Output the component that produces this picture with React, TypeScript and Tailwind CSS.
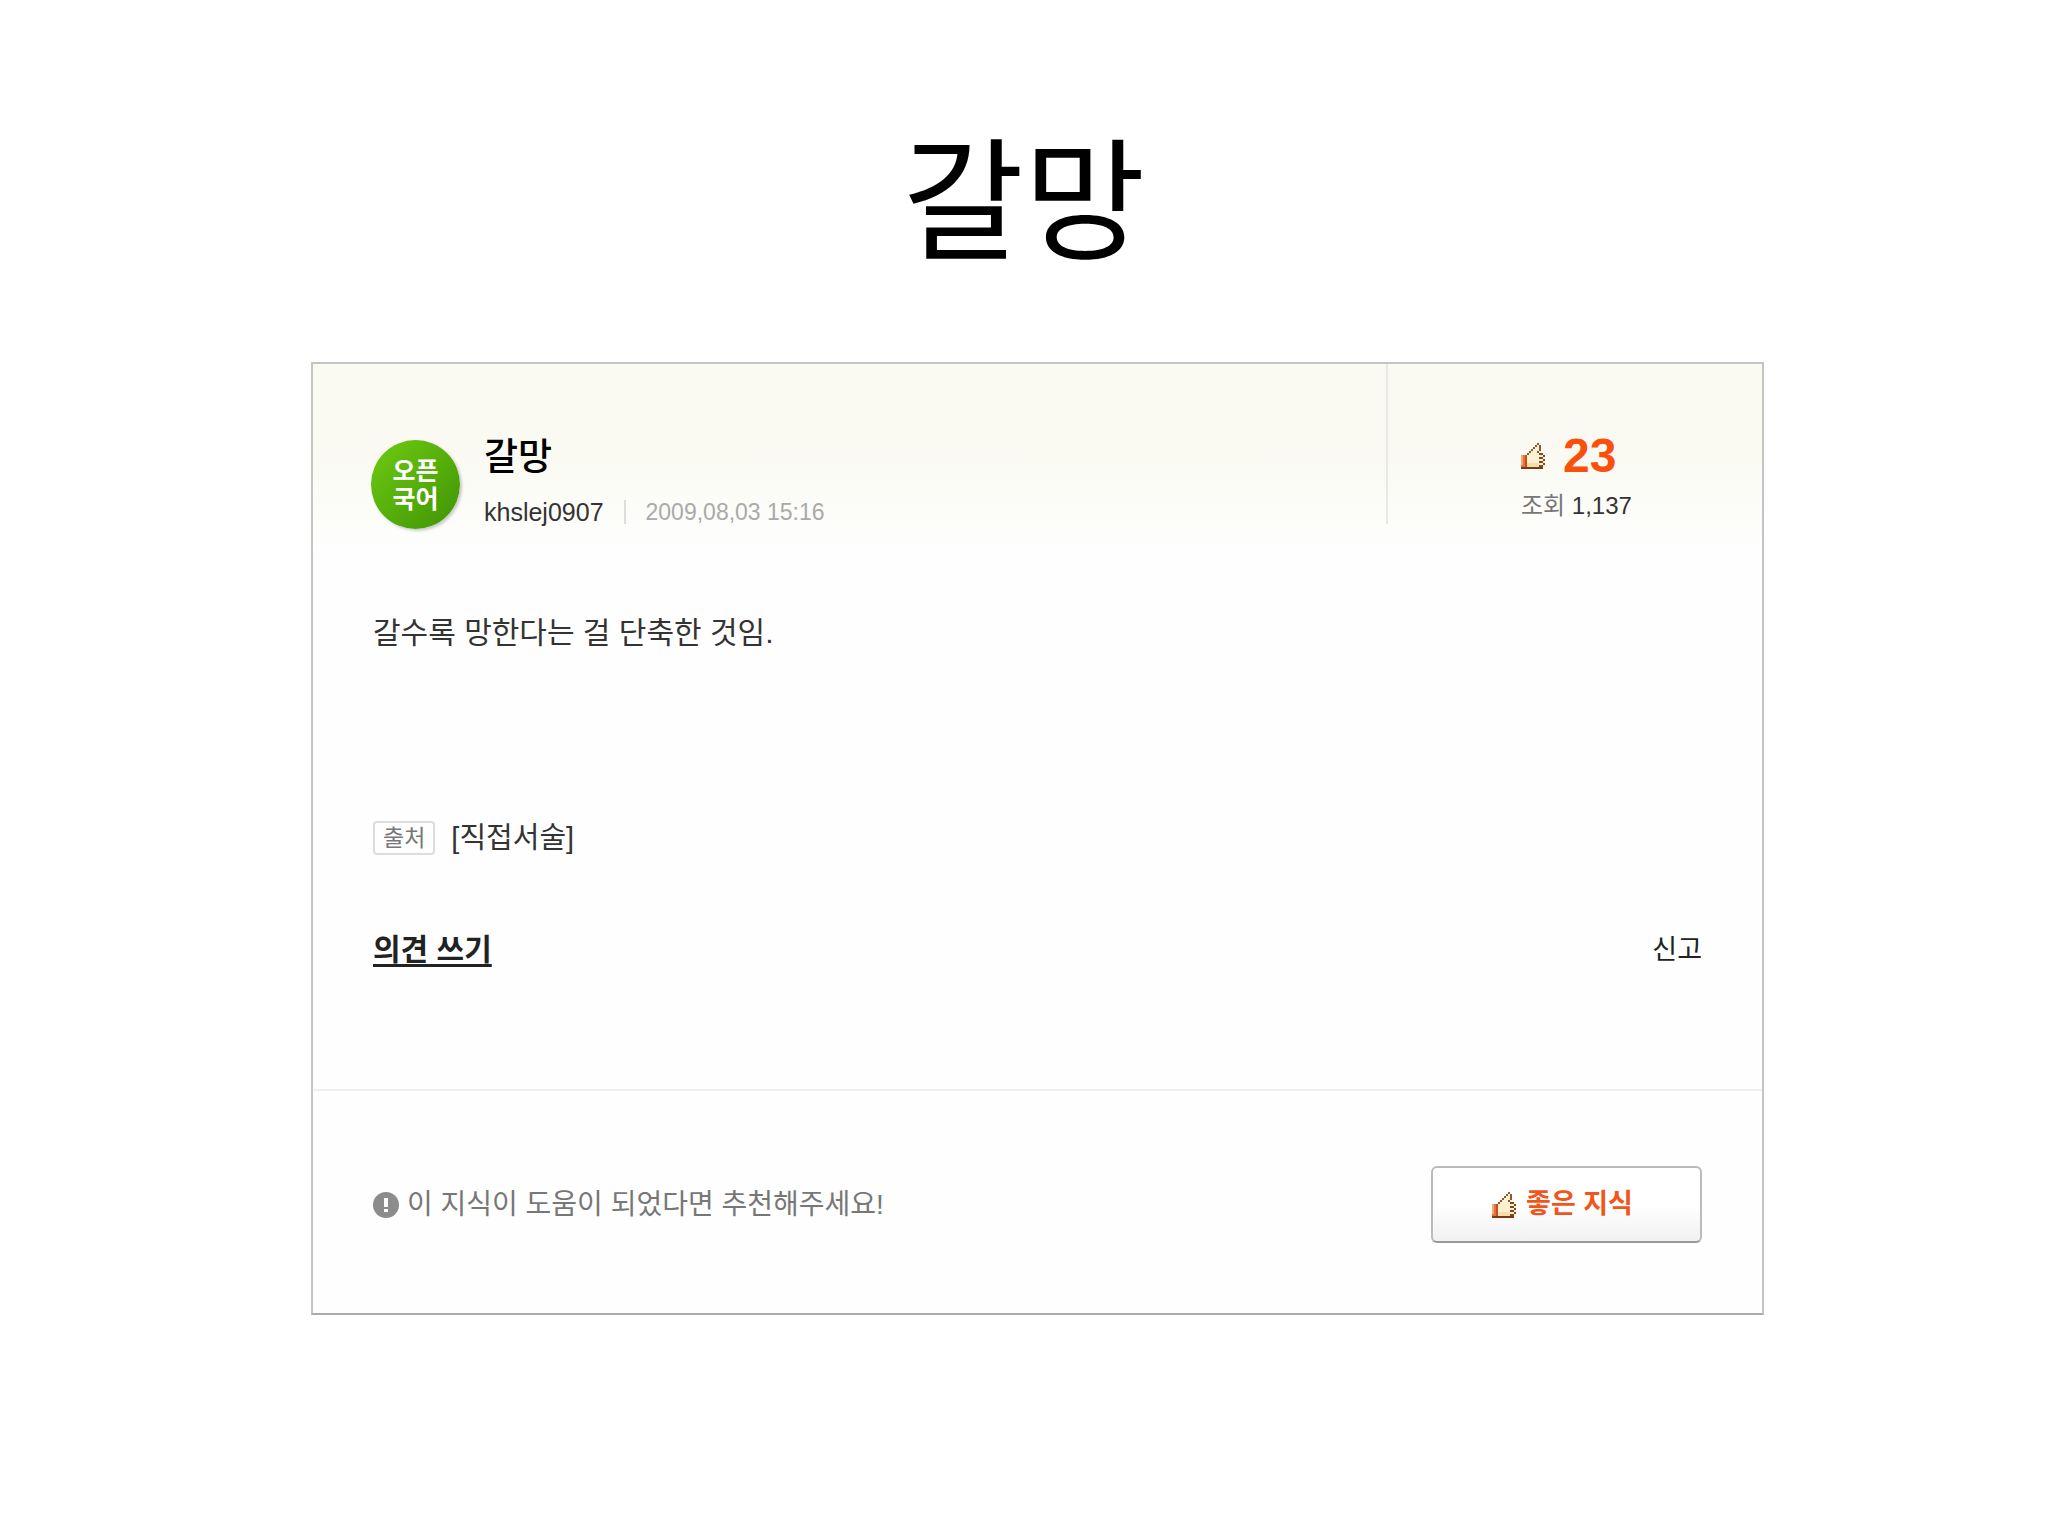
import { useState } from "react";

// Thumb icon on a 12 x 13 grid, one unit per drawn dot
function ThumbIcon() {
  return (
    <svg
      viewBox="0 0 12 13"
      className="h-[26px] w-6 shrink-0"
      shapeRendering="crispEdges"
      aria-hidden="true"
    >
      <path d="M3 6h1V5h1V4h1V3h1V2h1V1h1v3h1v1h1v1h1v6H3z" fill="#fdf0cf" />
      <path d="M3 10h6v2H3z" fill="#f8dda8" />
      <path d="M0 6h3v6H0z" fill="#e8703a" />
      <path d="M0 6h1v5H0z" fill="#f3a878" />
      <path d="M2 6h1v6H2z" fill="#c0501f" />
      <path
        d="M3 5h1v1H3zM4 4h1v1H4zM5 3h1v1H5zM6 2h1v1H6zM7 1h1v1H7zM8 0h1v1H8zM9 1h1v3H9zM8 4h1v1H8z"
        fill="#8a5a35"
      />
      <path
        d="M9 5h2v1H9zM11 6h1v1h-1zM9 7h2v1H9zM11 8h1v1h-1zM9 9h2v1H9zM11 10h1v1h-1zM9 11h2v1H9z"
        fill="#7a4a22"
      />
      <path d="M0 12h11v1H0z" fill="#7a3a18" />
    </svg>
  );
}

function NoticeIcon() {
  return (
    <svg viewBox="0 0 26 26" className="size-[26px] shrink-0" aria-hidden="true">
      <circle cx="13" cy="13" r="13" fill="#8c8c8c" />
      <path d="M11 6h4v9h-4zM11 17h4v3h-4z" fill="#fff" />
    </svg>
  );
}

function PostHeader() {
  return (
    <header className="flex h-[188px] bg-linear-to-b from-[#fafaf3] from-50% to-[#fefefe]">
      <div className="flex flex-1 items-start gap-6 pt-[76px] pl-[58px]">
        <div className="flex size-[89px] flex-col items-center justify-center rounded-full bg-linear-to-br from-[#6fcb12] to-[#3f9405] text-[25px] leading-7 font-bold text-white shadow-[2px_2px_3px_rgba(0,0,0,0.2)]">
          <span>오픈</span>
          <span>국어</span>
        </div>
        <div>
          <h2 className="text-[37px] leading-9 font-medium text-black">갈망</h2>
          <div className="mt-5 flex items-center text-[25px] leading-8">
            <a href="#author" className="text-[#333]">
              khslej0907
            </a>
            <span className="mx-5 h-6 w-0.5 bg-[#ddd]" />
            <time className="text-[23px] text-[#aaa]">2009,08,03 15:16</time>
          </div>
        </div>
      </div>
      <div className="h-40 w-0.5 bg-[#e8e8e4]" />
      <div className="w-[374px] pt-[66px] pl-[133px]">
        <div className="flex items-center gap-[18px]">
          <ThumbIcon />
          <strong className="text-[48px] leading-[52px] text-[#f9500b]">23</strong>
        </div>
        <p className="mt-2 text-[24px] leading-8 text-[#333]">
          <span className="text-[#777]">조회</span> 1,137
        </p>
      </div>
    </header>
  );
}

export default function App() {
  const [liked, setLiked] = useState(false);

  return (
    <main className="min-h-screen bg-white font-['Liberation_Sans','Noto_Sans_CJK_KR',sans-serif]">
      <h1 className="pt-[104px] text-center text-[132px] leading-[200px] text-black">
        갈망
      </h1>

      <article className="mt-[58px] mr-[284px] ml-[311px] border-2 border-[#c4c4c4] border-b-[#aaa] bg-[#fefefe]">
        <PostHeader />

        <section className="px-[60px] pt-[61px] pb-[119px] text-[#333]">
          <p className="text-[30px] leading-10">갈수록 망한다는 걸 단축한 것임.</p>

          <div className="mt-[165px] flex items-center gap-4 text-[29px] leading-10">
            <span className="rounded-sm border-2 border-[#ddd] px-2 text-[23px] leading-[30px] text-[#777]">
              출처
            </span>
            <span>[직접서술]</span>
          </div>

          <div className="mt-[72px] flex items-center justify-between leading-10 text-[#222]">
            <a href="#comment" className="text-[30px] font-bold underline underline-offset-4">
              의견 쓰기
            </a>
            <a href="#report" className="text-[27px]">
              신고
            </a>
          </div>
        </section>

        <footer className="flex items-center justify-between border-t-2 border-[#f0eeee] px-[60px] pt-[75px] pb-[70px]">
          <p className="flex items-center gap-2 text-[28px] leading-10 text-[#777]">
            <NoticeIcon />
            이 지식이 도움이 되었다면 추천해주세요!
          </p>
          <button
            type="button"
            aria-pressed={liked}
            onClick={() => setLiked(!liked)}
            className="flex h-[77px] w-[271px] items-center justify-center gap-2.5 rounded-md border-2 border-[#bbb] border-b-[#999] bg-linear-to-b from-white from-50% to-[#f2f1f2] pr-2 text-[27px] font-bold text-[#f0561c]"
          >
            <ThumbIcon />
            좋은 지식
          </button>
        </footer>
      </article>
    </main>
  );
}
